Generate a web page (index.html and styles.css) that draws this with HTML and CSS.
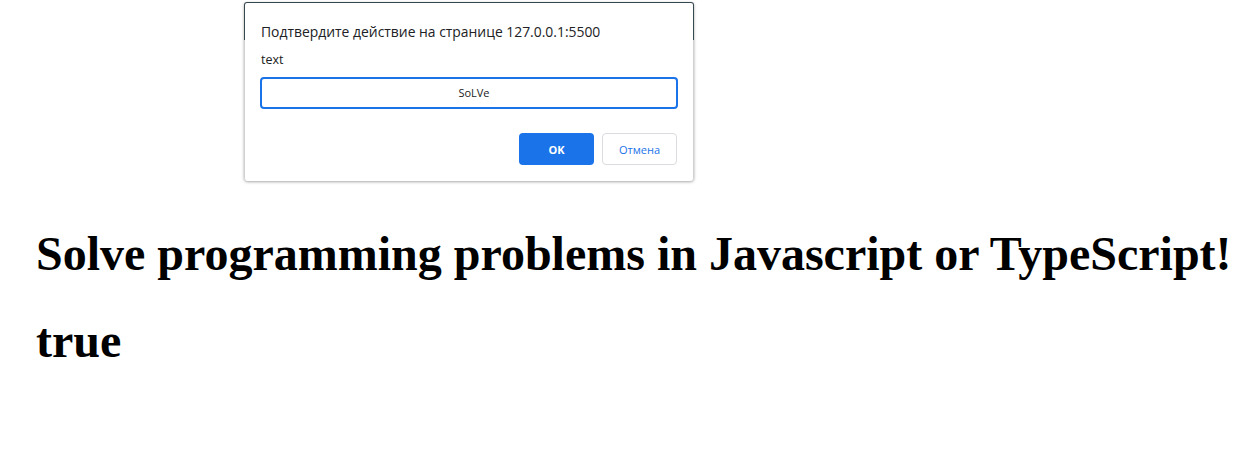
FILE: index.html
```html
<!DOCTYPE html>
<html lang="ru">
<head>
<meta charset="utf-8">
<title>Solve</title>
<link rel="stylesheet" href="styles.css">
</head>
<body>
<main class="page">
  <h1 class="title">Solve programming problems in Javascript or TypeScript!</h1>
  <h1 class="title">true</h1>
</main>
<div class="dialog-frame">
  <div class="dialog">
    <div class="dialog-title">Подтвердите действие на странице 127.0.0.1:5500</div>
    <div class="dialog-msg">text</div>
    <div class="dialog-input">SoLVe</div>
    <div class="dialog-actions">
      <button class="btn btn-ok">OK</button>
      <button class="btn btn-cancel">Отмена</button>
    </div>
  </div>
</div>
</body>
</html>
```
FILE: styles.css
```css
html, body {
  margin: 0;
  padding: 0;
  background: #ffffff;
}
.page {
  padding: 194px 0 0 36px;
  font-family: "Liberation Serif", "Times New Roman", serif;
  color: #000;
}
.title {
  font-size: 48px;
  font-weight: bold;
  margin: 32px 0;
  white-space: nowrap;
}
.dialog-frame {
  position: absolute;
  left: 244px;
  top: 2px;
  width: 448px;
  padding: 1px 1px 0 1px;
  border-radius: 3px 3px 4px 4px;
  background: linear-gradient(#37474f 0 38px, #d0d0d0 38px);
  box-shadow: 0 1px 3px rgba(0,0,0,0.35);
}
.dialog {
  background: #fff;
  border-radius: 2px 2px 3px 3px;
  padding: 19px 15px 16px 15px;
  font-family: "Open Sans", "Noto Sans", sans-serif;
  color: #202124;
  display: flex;
  flex-direction: column;
}
.dialog-title {
  font-size: 13.9px;
  line-height: 20px;
  padding-left: 1px;
}
.dialog-msg {
  font-size: 12.5px;
  line-height: 18px;
  margin-top: 9px;
  padding-left: 1px;
}
.dialog-input {
  margin-top: 8px;
  height: 28px;
  border: 2px solid #1a73e8;
  border-radius: 4px;
  font-size: 11px;
  line-height: 28px;
  text-align: center;
  padding-left: 10px;
  color: #202124;
}
.dialog-actions {
  display: flex;
  justify-content: flex-end;
  gap: 8px;
  margin-top: 24px;
  padding-right: 1px;
}
.btn {
  width: 75px;
  height: 32px;
  border-radius: 4px;
  font-family: "Open Sans", "Noto Sans", sans-serif;
  font-size: 11px;
  padding: 0;
  cursor: pointer;
}
.btn-ok {
  background: #1a73e8;
  border: none;
  color: #fff;
  font-weight: bold;
}
.btn-cancel {
  background: #fff;
  border: 1px solid #dadce0;
  color: #1a73e8;
}
```
